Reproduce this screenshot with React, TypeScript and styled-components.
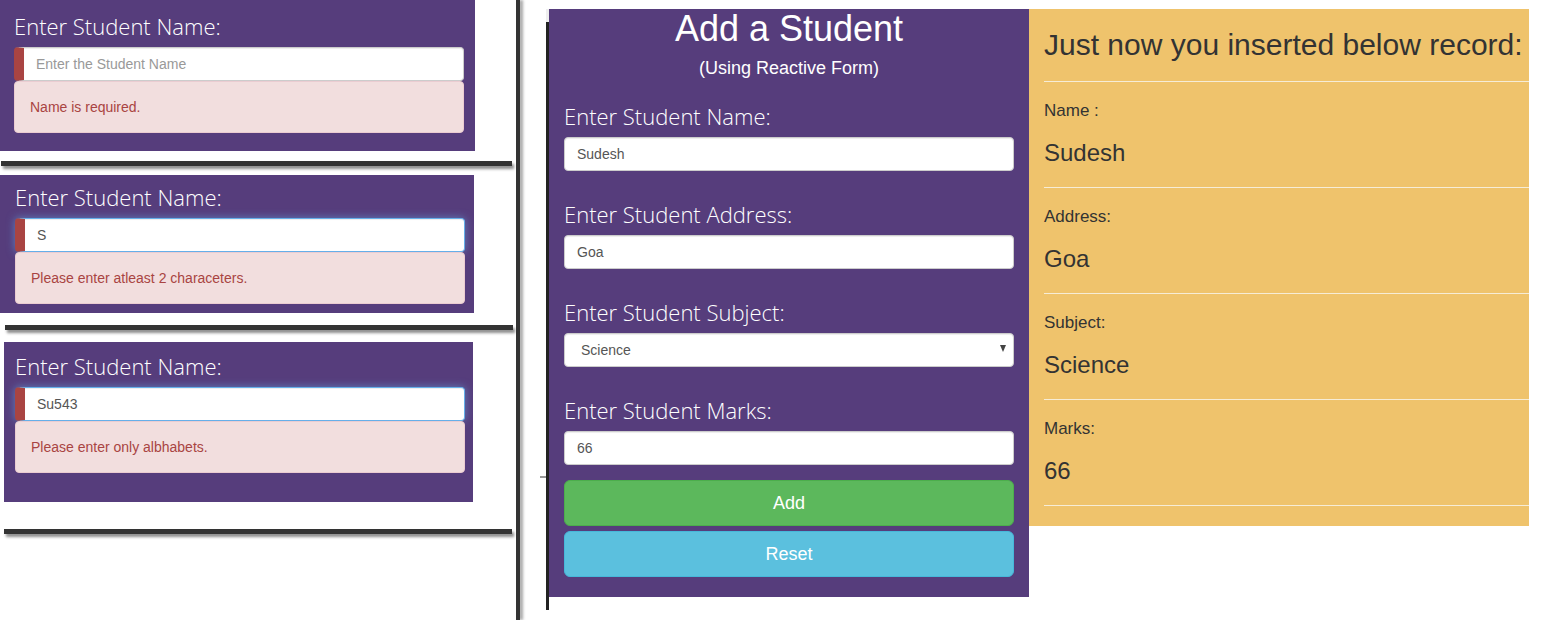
import React from "react";
import styled, { createGlobalStyle, css } from "styled-components";

const Global = createGlobalStyle`
  html, body { margin: 0; padding: 0; background: #fff; }
  body { font-family: "Liberation Sans", Arial, sans-serif; overflow: hidden; }
  * { box-sizing: border-box; }
`;

const Page = styled.div`
  display: flex;
  align-items: flex-start;
  width: 1552px;
  height: 620px;
  overflow: hidden;
`;

/* ---------- left column: validation snippets ---------- */

const LeftColumn = styled.div`
  width: 516px;
  flex-shrink: 0;
  display: flex;
  flex-direction: column;
  align-items: flex-start;
`;

const SnippetPanel = styled.section<{ $ml: number; $w: number; $pl: number; $pt: number; $pb: number; $mt: number }>`
  margin-left: ${(p) => p.$ml}px;
  margin-top: ${(p) => p.$mt}px;
  width: ${(p) => p.$w}px;
  padding: ${(p) => p.$pt}px 0 ${(p) => p.$pb}px ${(p) => p.$pl}px;
  background: #563d7c;
`;

const SnippetBody = styled.div`
  width: 450px;
`;

const ShadowBar = styled.div<{ $ml: number; $w: number; $mt: number }>`
  margin-left: ${(p) => p.$ml}px;
  margin-top: ${(p) => p.$mt}px;
  width: ${(p) => p.$w}px;
  height: 5px;
  background: #333;
  box-shadow: 2px 3px 3px rgba(0, 0, 0, 0.45);
`;

const VerticalRule = styled.div`
  width: 4px;
  height: 620px;
  flex-shrink: 0;
  background: #333;
  box-shadow: 3px 0 3px rgba(0, 0, 0, 0.35);
  margin-right: 26px;
`;

/* ---------- shared form parts ---------- */

const FieldLabel = styled.label`
  display: block;
  font-family: "Open Sans", "Segoe UI", sans-serif;
  font-weight: 300;
  font-size: 22px;
  line-height: 30px;
  color: #fff;
  margin-bottom: 6px;
  white-space: nowrap;
`;

const TextInput = styled.input<{ $invalid?: boolean; $focus?: boolean }>`
  display: block;
  width: 100%;
  height: 34px;
  padding: 6px 12px;
  font-family: "Liberation Sans", Arial, sans-serif;
  font-size: 14px;
  line-height: 20px;
  color: #555;
  background: #fff;
  border: 1px solid #ccc;
  border-radius: 4px;
  box-shadow: inset 0 1px 1px rgba(0, 0, 0, 0.075);
  outline: none;
  &::placeholder {
    color: #999;
  }
  ${(p) =>
    p.$focus &&
    css`
      border-color: #66afe9;
      box-shadow: inset 0 1px 1px rgba(0, 0, 0, 0.075), 0 0 8px rgba(102, 175, 233, 0.6);
    `}
  ${(p) =>
    p.$invalid &&
    css`
      border-left: 10px solid #a94442;
    `}
`;

const ErrorAlert = styled.div`
  padding: 15px;
  border: 1px solid #ebccd1;
  border-radius: 4px;
  background: #f2dede;
  color: #a94442;
  font-size: 14px;
  line-height: 20px;
`;

/* ---------- middle: form ---------- */

const FormColumn = styled.div`
  display: flex;
  align-items: flex-start;
  padding-top: 9px;
  flex-shrink: 0;
`;

const FormEdge = styled.div`
  position: relative;
  width: 3px;
  height: 601px;
  background: linear-gradient(#eeeeee 0 13px, #222 13px);
  &::after {
    content: "";
    position: absolute;
    left: -6px;
    top: 467px;
    width: 6px;
    height: 2px;
    background: #999;
  }
`;

const FormPanel = styled.form`
  width: 480px;
  background: #563d7c;
  padding: 0 15px 20px;
  display: flex;
  flex-direction: column;
`;

const FormTitle = styled.h1`
  margin: 0;
  font-family: "Liberation Sans", Arial, sans-serif;
  font-weight: normal;
  font-size: 36px;
  line-height: 40px;
  color: #fff;
  text-align: center;
`;

const FormSubtitle = styled.p`
  margin: 9px 0 23px;
  font-size: 18px;
  line-height: 20px;
  color: #fff;
  text-align: center;
`;

const FieldStack = styled.div`
  display: flex;
  flex-direction: column;
  gap: 28px;
`;

const SelectBox = styled.div`
  position: relative;
`;

const SelectInput = styled.select`
  display: block;
  width: 100%;
  height: 34px;
  padding: 6px 12px 6px 16px;
  appearance: none;
  font-family: "Liberation Sans", Arial, sans-serif;
  font-size: 14px;
  color: #555;
  background: #fff;
  border: 1px solid #ccc;
  border-radius: 4px;
  box-shadow: inset 0 1px 1px rgba(0, 0, 0, 0.075);
  outline: none;
`;

const Caret = styled.span`
  position: absolute;
  right: 8px;
  top: 12px;
  width: 0;
  height: 0;
  border-left: 3.5px solid transparent;
  border-right: 3.5px solid transparent;
  border-top: 7px solid #444;
  pointer-events: none;
`;

const ButtonStack = styled.div`
  margin-top: 15px;
  display: flex;
  flex-direction: column;
  gap: 5px;
`;

const ActionButton = styled.button<{ $variant: "add" | "reset" }>`
  height: 46px;
  width: 100%;
  border: 1px solid ${(p) => (p.$variant === "add" ? "#4cae4c" : "#46b8da")};
  border-radius: 6px;
  background: ${(p) => (p.$variant === "add" ? "#5cb85c" : "#5bc0de")};
  color: #fff;
  font-family: "Liberation Sans", Arial, sans-serif;
  font-size: 18px;
  line-height: 24px;
  cursor: pointer;
`;

/* ---------- right: inserted record ---------- */

const RecordPanel = styled.aside`
  width: 500px;
  flex-shrink: 0;
  margin-top: 9px;
  background: #efc36c;
  padding: 19px 0 20px 15px;
  color: #333;
`;

const RecordHeading = styled.h2`
  margin: 0 0 20px;
  font-family: "Liberation Sans", Arial, sans-serif;
  font-weight: normal;
  font-size: 30px;
  line-height: 33px;
  white-space: nowrap;
`;

const RecordItem = styled.div`
  border-top: 1px solid #f6ecd6;
  padding: 19px 0 20px;
`;

const RecordLabel = styled.div`
  font-size: 17px;
  line-height: 20px;
  margin-bottom: 18px;
`;

const RecordValue = styled.div`
  font-size: 24px;
  line-height: 28px;
`;

const RecordEnd = styled.hr`
  margin: 0;
  border: 0;
  border-top: 1px solid #f6ecd6;
`;

const snippets = [
  {
    panel: { ml: 0, w: 475, pl: 14, pt: 11, pb: 18, mt: 0 },
    bar: { ml: 1, w: 511, mt: 10 },
    value: "",
    focus: false,
    message: "Name is required.",
  },
  {
    panel: { ml: 0, w: 474, pl: 15, pt: 7, pb: 9, mt: 9 },
    bar: { ml: 5, w: 508, mt: 12 },
    value: "S",
    focus: true,
    message: "Please enter atleast 2 characeters.",
  },
  {
    panel: { ml: 4, w: 469, pl: 11, pt: 9, pb: 29, mt: 12 },
    bar: { ml: 4, w: 508, mt: 27 },
    value: "Su543",
    focus: true,
    message: "Please enter only albhabets.",
  },
];

const record = [
  { label: "Name :", value: "Sudesh" },
  { label: "Address:", value: "Goa" },
  { label: "Subject:", value: "Science" },
  { label: "Marks:", value: "66" },
];

export default function App() {
  return (
    <>
      <Global />
      <Page>
        <LeftColumn>
          {snippets.map((s, i) => (
            <React.Fragment key={i}>
              <SnippetPanel
                $ml={s.panel.ml}
                $w={s.panel.w}
                $pl={s.panel.pl}
                $pt={s.panel.pt}
                $pb={s.panel.pb}
                $mt={s.panel.mt}
              >
                <SnippetBody>
                  <FieldLabel>Enter Student Name:</FieldLabel>
                  <TextInput
                    $invalid
                    $focus={s.focus}
                    placeholder="Enter the Student Name"
                    defaultValue={s.value}
                  />
                  <ErrorAlert>{s.message}</ErrorAlert>
                </SnippetBody>
              </SnippetPanel>
              <ShadowBar $ml={s.bar.ml} $w={s.bar.w} $mt={s.bar.mt} />
            </React.Fragment>
          ))}
        </LeftColumn>

        <VerticalRule />

        <FormColumn>
          <FormEdge />
          <FormPanel onSubmit={(e) => e.preventDefault()}>
            <FormTitle>Add a Student</FormTitle>
            <FormSubtitle>(Using Reactive Form)</FormSubtitle>
            <FieldStack>
              <div>
                <FieldLabel>Enter Student Name:</FieldLabel>
                <TextInput defaultValue="Sudesh" />
              </div>
              <div>
                <FieldLabel>Enter Student Address:</FieldLabel>
                <TextInput defaultValue="Goa" />
              </div>
              <div>
                <FieldLabel>Enter Student Subject:</FieldLabel>
                <SelectBox>
                  <SelectInput defaultValue="Science">
                    <option>Science</option>
                    <option>Maths</option>
                    <option>English</option>
                  </SelectInput>
                  <Caret />
                </SelectBox>
              </div>
              <div>
                <FieldLabel>Enter Student Marks:</FieldLabel>
                <TextInput defaultValue="66" />
              </div>
            </FieldStack>
            <ButtonStack>
              <ActionButton type="submit" $variant="add">
                Add
              </ActionButton>
              <ActionButton type="reset" $variant="reset">
                Reset
              </ActionButton>
            </ButtonStack>
          </FormPanel>
        </FormColumn>

        <RecordPanel>
          <RecordHeading>Just now you inserted below record:</RecordHeading>
          {record.map((r) => (
            <RecordItem key={r.label}>
              <RecordLabel>{r.label}</RecordLabel>
              <RecordValue>{r.value}</RecordValue>
            </RecordItem>
          ))}
          <RecordEnd />
        </RecordPanel>
      </Page>
    </>
  );
}
